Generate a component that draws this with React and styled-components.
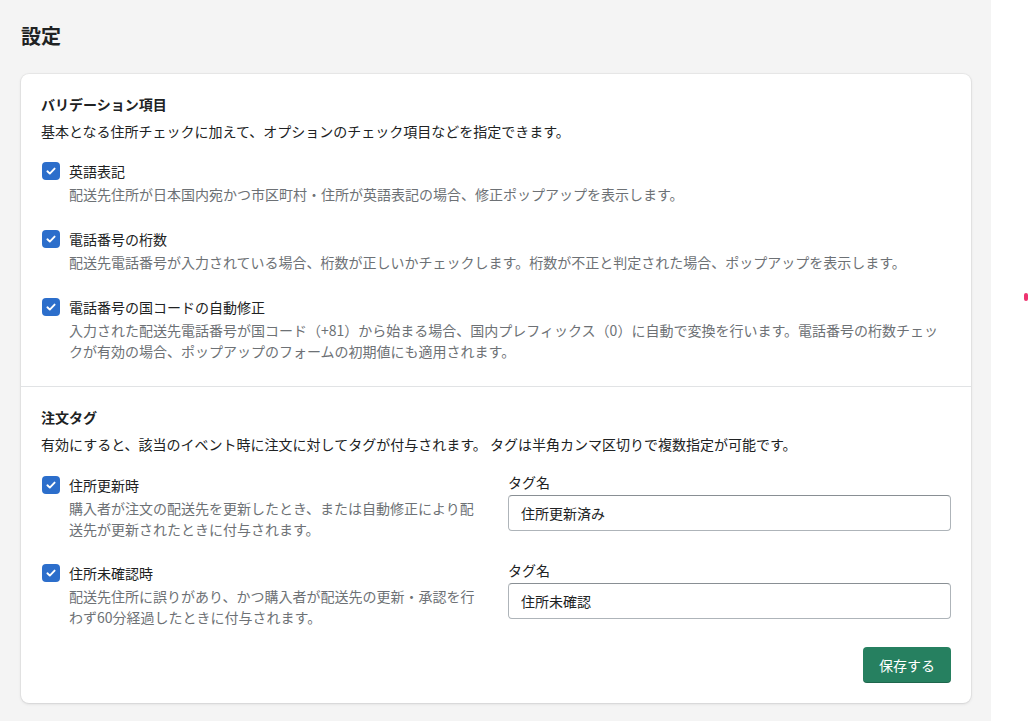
import React from "react";
import styled, { createGlobalStyle } from "styled-components";

const GlobalStyle = createGlobalStyle`
  html, body {
    margin: 0;
    padding: 0;
    background: #ffffff;
  }
  body {
    font-family: "Noto Sans CJK JP", "Noto Sans", sans-serif;
    font-size: 14px;
    color: #202223;
    -webkit-font-smoothing: antialiased;
  }
  * {
    box-sizing: border-box;
  }
`;

const validations = [
  {
    label: "英語表記",
    help: "配送先住所が日本国内宛かつ市区町村・住所が英語表記の場合、修正ポップアップを表示します。",
  },
  {
    label: "電話番号の桁数",
    help: "配送先電話番号が入力されている場合、桁数が正しいかチェックします。桁数が不正と判定された場合、ポップアップを表示します。",
  },
  {
    label: "電話番号の国コードの自動修正",
    help: "入力された配送先電話番号が国コード（+81）から始まる場合、国内プレフィックス（0）に自動で変換を行います。電話番号の桁数チェックが有効の場合、ポップアップのフォームの初期値にも適用されます。",
  },
];

const tags = [
  {
    label: "住所更新時",
    help: "購入者が注文の配送先を更新したとき、または自動修正により配送先が更新されたときに付与されます。",
    value: "住所更新済み",
  },
  {
    label: "住所未確認時",
    help: "配送先住所に誤りがあり、かつ購入者が配送先の更新・承認を行わず60分経過したときに付与されます。",
    value: "住所未確認",
  },
];

function Checkbox() {
  return (
    <BoxWrap>
      <Box>
        <svg width="12" height="12" viewBox="0 0 12 12" fill="none">
          <path
            d="M2.4 6.3 L4.8 8.6 L9.6 3.6"
            stroke="#ffffff"
            strokeWidth="1.9"
            strokeLinecap="round"
            strokeLinejoin="round"
          />
        </svg>
      </Box>
    </BoxWrap>
  );
}

function Option({ label, help }) {
  return (
    <OptionRow>
      <Checkbox />
      <OptionBody>
        <OptionLabel>{label}</OptionLabel>
        <OptionHelp>{help}</OptionHelp>
      </OptionBody>
    </OptionRow>
  );
}

export default function App() {
  return (
    <>
      <GlobalStyle />
      <Page>
        <Main>
          <Title>設定</Title>
          <Card>
            <Section>
              <SectionTitle>バリデーション項目</SectionTitle>
              <SectionText>
                基本となる住所チェックに加えて、オプションのチェック項目などを指定できます。
              </SectionText>
              <OptionList>
                {validations.map((v) => (
                  <Option key={v.label} label={v.label} help={v.help} />
                ))}
              </OptionList>
            </Section>
            <Section divided last>
              <SectionTitle>注文タグ</SectionTitle>
              <SectionText>
                有効にすると、該当のイベント時に注文に対してタグが付与されます。 タグは半角カンマ区切りで複数指定が可能です。
              </SectionText>
              <TagList>
                {tags.map((t) => (
                  <TagRow key={t.label}>
                    <TagLeft>
                      <Option label={t.label} help={t.help} />
                    </TagLeft>
                    <Field>
                      <FieldLabel>タグ名</FieldLabel>
                      <Input defaultValue={t.value} />
                    </Field>
                  </TagRow>
                ))}
              </TagList>
              <Footer>
                <SaveButton>保存する</SaveButton>
              </Footer>
            </Section>
          </Card>
        </Main>
        <Side>
          <Dot />
        </Side>
      </Page>
    </>
  );
}

const Page = styled.div`
  display: flex;
  min-height: 100vh;
`;

const Main = styled.main`
  width: 991px;
  flex-shrink: 0;
  background: #f4f4f4;
  padding: 22px 20px 40px 21px;
`;

const Side = styled.aside`
  flex: 1;
  background: #ffffff;
  padding: 293px 0 0 33px;
`;

const Dot = styled.div`
  width: 4px;
  height: 8px;
  border-radius: 2px;
  background: #ee3470;
`;

const Title = styled.h1`
  margin: 0 0 24px;
  font-size: 20px;
  line-height: 28px;
  font-weight: 700;
  color: #202223;
`;

const Card = styled.div`
  background: #ffffff;
  border-radius: 8px;
  box-shadow: 0 0 0 1px rgba(63, 63, 68, 0.05), 0 1px 3px rgba(63, 63, 68, 0.15);
`;

const Section = styled.section`
  padding: 20px 20px ${(p) => (p.last ? "20px" : "24px")};
  border-top: ${(p) => (p.divided ? "1px solid #e1e3e5" : "none")};
`;

const SectionTitle = styled.h2`
  margin: 0 0 7px;
  font-size: 14px;
  line-height: 20px;
  font-weight: 600;
  color: #202223;
`;

const SectionText = styled.p`
  margin: 0;
  font-size: 14px;
  line-height: 20px;
  color: #202223;
`;

const OptionList = styled.div`
  display: flex;
  flex-direction: column;
  gap: 24px;
  margin-top: 20px;
`;

const OptionRow = styled.div`
  display: flex;
  gap: 8px;
`;

const BoxWrap = styled.div`
  width: 20px;
  height: 20px;
  flex-shrink: 0;
  display: flex;
  align-items: center;
  justify-content: center;
`;

const Box = styled.span`
  width: 18px;
  height: 18px;
  border-radius: 4px;
  background: #2c6ecb;
  display: flex;
  align-items: center;
  justify-content: center;
`;

const OptionBody = styled.div`
  flex: 1;
  min-width: 0;
`;

const OptionLabel = styled.div`
  font-size: 14px;
  line-height: 20px;
  color: #202223;
`;

const OptionHelp = styled.div`
  margin-top: 3px;
  font-size: 14px;
  line-height: 21px;
  color: #6d7175;
`;

const TagList = styled.div`
  display: flex;
  flex-direction: column;
  gap: 20px;
  margin-top: 18px;
`;

const TagRow = styled.div`
  display: grid;
  grid-template-columns: 1fr 1fr;
  column-gap: 24px;
  align-items: start;
`;

const TagLeft = styled.div`
  padding-top: 3px;
`;

const Field = styled.div`
  display: flex;
  flex-direction: column;
`;

const FieldLabel = styled.label`
  font-size: 14px;
  line-height: 20px;
  color: #202223;
  margin-bottom: 3px;
`;

const Input = styled.input`
  height: 36px;
  width: 100%;
  padding: 0 12px;
  border: 1px solid #aeb4b9;
  border-top-color: #898f94;
  border-radius: 4px;
  font-family: inherit;
  font-size: 14px;
  color: #202223;
  background: #ffffff;
  outline: none;
`;

const Footer = styled.div`
  display: flex;
  justify-content: flex-end;
  margin-top: 19px;
`;

const SaveButton = styled.button`
  height: 36px;
  padding: 0 16px;
  border: none;
  border-radius: 4px;
  background: #268060;
  color: #ffffff;
  font-family: inherit;
  font-size: 14px;
  cursor: pointer;
  box-shadow: inset 0 -1px 0 rgba(0, 0, 0, 0.2);
`;
